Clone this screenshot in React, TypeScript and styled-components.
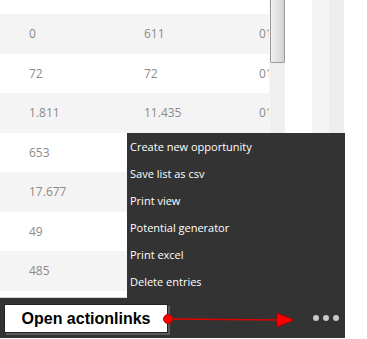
import styled, {createGlobalStyle} from 'styled-components';

const GlobalStyle = createGlobalStyle`
    html, body {
        margin: 0;
        padding: 0;
        background: #ffffff;
        overflow: hidden;
    }
`;

interface Row {
    readonly first: string;
    readonly second: string;
    readonly third: string;
}

const rows: Row[] = [
    {first: '0', second: '611', third: '01.01.2019'},
    {first: '72', second: '72', third: '01.01.2019'},
    {first: '1.811', second: '11.435', third: '01.01.2019'},
    {first: '653', second: '2.904', third: '01.01.2019'},
    {first: '17.677', second: '20.112', third: '01.01.2019'},
    {first: '49', second: '153', third: '01.01.2019'},
    {first: '485', second: '1.206', third: '01.01.2019'},
];

const actions = [
    'Create new opportunity',
    'Save list as csv',
    'Print view',
    'Potential generator',
    'Print excel',
    'Delete entries',
];

const Page = styled.div`
    position: relative;
    width: 367px;
    height: 339px;
`;

const Frame = styled.div`
    width: 345px;
    display: flex;
    flex-direction: column;
`;

const Content = styled.div`
    display: flex;
    height: 297px;
    border-bottom: 1px solid #d6d6d6;
`;

const Table = styled.div`
    width: 269px;
    padding-top: 14px;
    overflow: hidden;
`;

const TableRow = styled.div<{striped: boolean}>`
    display: grid;
    grid-template-columns: 115px 115px 1fr;
    align-items: center;
    height: 39.5px;
    padding-left: 29px;
    background: ${props => props.striped ? '#f4f4f4' : '#ffffff'};
    font-family: "Open Sans", sans-serif;
    font-size: 12px;
    color: #8a8a8a;
    white-space: nowrap;
    overflow: hidden;
`;

const Cell = styled.span`
    overflow: hidden;
`;

const ScrollTrack = styled.div`
    width: 16px;
    background: #efefef;
    border-left: 1px solid #f6f6f6;
    box-sizing: border-box;
`;

const ScrollThumb = styled.div`
    height: 63px;
    box-sizing: border-box;
    border: 1px solid #9a9a9a;
    border-top: none;
    border-radius: 0 0 2px 2px;
    background: linear-gradient(to right, #f2f2f2, #d2d2d2);
`;

const Gap = styled.div`
    width: 27px;
    background: #ffffff;
`;

const Strip = styled.div<{shade: string; size: number}>`
    width: ${props => props.size}px;
    background: ${props => props.shade};
`;

const Footer = styled.div`
    height: 40px;
    background: #333333;
    display: flex;
    align-items: center;
    justify-content: flex-end;
    gap: 4px;
    padding-right: 6px;
`;

const Dot = styled.span`
    width: 6px;
    height: 6px;
    border-radius: 50%;
    background: #c9c9c9;
`;

const Menu = styled.ul`
    position: absolute;
    left: 127px;
    top: 133px;
    width: 218px;
    height: 165px;
    margin: 0;
    padding: 0;
    list-style: none;
    background: #333333;
`;

const MenuItem = styled.li`
    height: 27px;
    line-height: 27px;
    padding-left: 3px;
    font-family: "Open Sans", sans-serif;
    font-size: 11px;
    color: #ffffff;
    white-space: nowrap;
`;

const Callout = styled.div`
    position: absolute;
    left: 4px;
    top: 304px;
    width: 164px;
    height: 29px;
    box-sizing: border-box;
    border: 1px solid #222222;
    background: #ffffff;
    box-shadow: 2px 2px 0 #5a5a5a;
    display: flex;
    align-items: center;
    justify-content: center;
    font-family: "Liberation Sans", Arial, sans-serif;
    font-weight: bold;
    font-size: 16px;
    color: #000000;
`;

const Pointer = styled.svg`
    position: absolute;
    left: 160px;
    top: 308px;
`;

export default function App() {
    return <Page>
        <GlobalStyle/>
        <Frame>
            <Content>
                <Table>
                    {rows.map((row, index) =>
                        <TableRow key={index} striped={index % 2 === 0}>
                            <Cell>{row.first}</Cell>
                            <Cell>{row.second}</Cell>
                            <Cell>{row.third}</Cell>
                        </TableRow>
                    )}
                </Table>
                <ScrollTrack>
                    <ScrollThumb/>
                </ScrollTrack>
                <Gap/>
                <Strip shade="#f4f4f4" size={17}/>
                <Strip shade="#eeeeee" size={15}/>
            </Content>
            <Footer>
                <Dot/><Dot/><Dot/>
            </Footer>
        </Frame>

        <Menu>
            {actions.map(action => <MenuItem key={action}>{action}</MenuItem>)}
        </Menu>

        <Callout>Open actionlinks</Callout>
        <Pointer width="140" height="24" viewBox="0 0 140 24">
            <line x1="8" y1="11" x2="120" y2="12" stroke="#e00000" strokeWidth="1.5"/>
            <polygon points="117,5 134,12 117,19" fill="#ff0000" stroke="#b00000" strokeWidth="1"/>
            <circle cx="8" cy="11" r="4.5" fill="#ff0000" stroke="#c00000" strokeWidth="1"/>
        </Pointer>
    </Page>;
}
